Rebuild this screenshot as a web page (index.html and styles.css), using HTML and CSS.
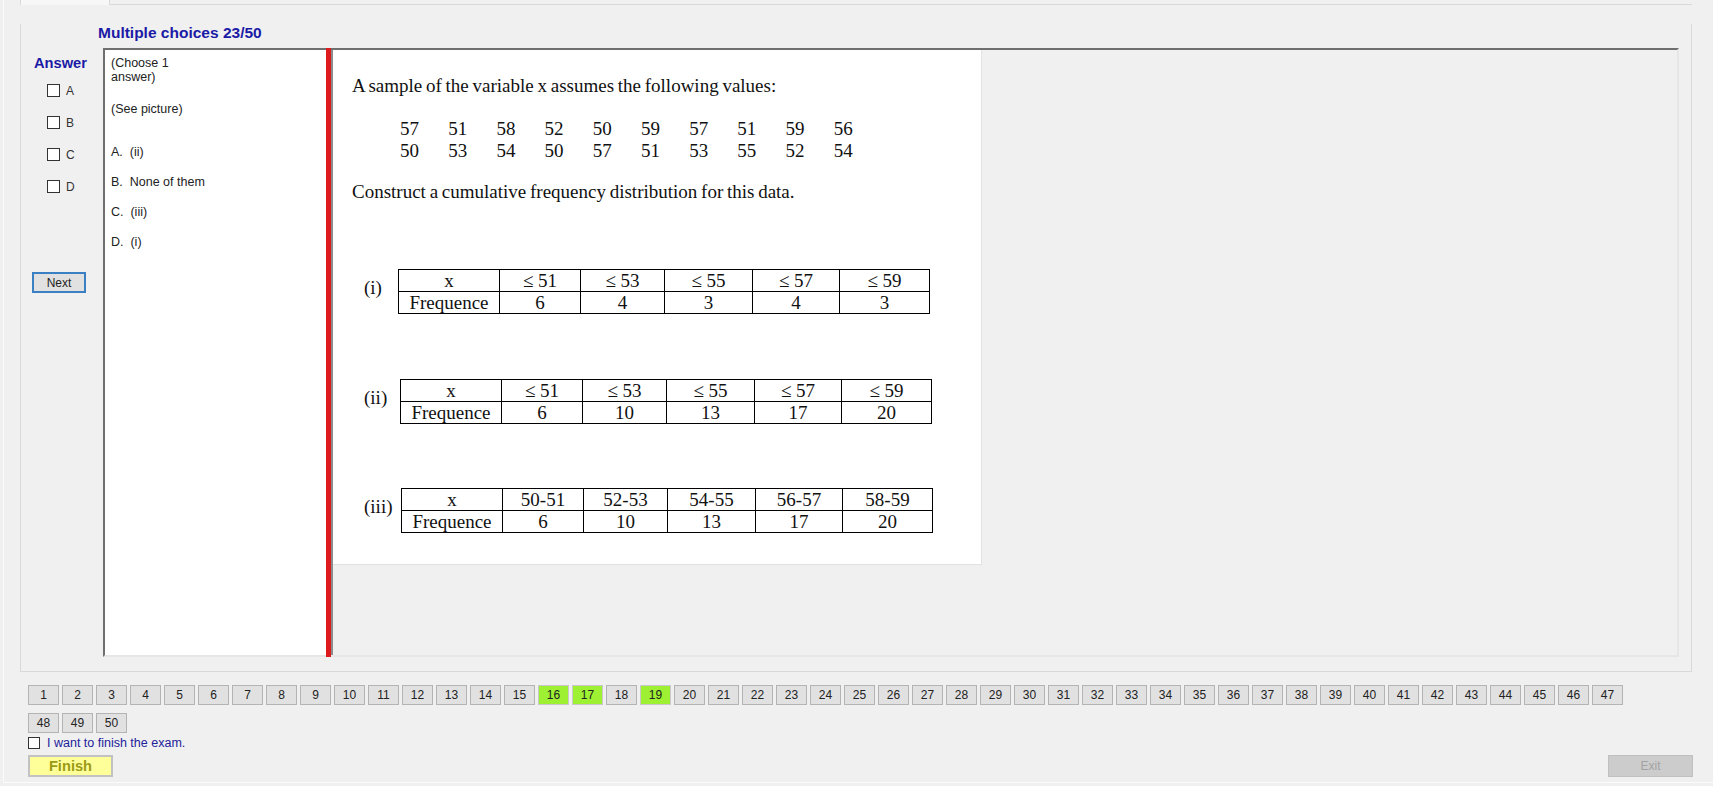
FILE: index.html
```html
<!DOCTYPE html>
<html>
<head>
<meta charset="utf-8">
<title>Exam</title>
<link rel="stylesheet" href="styles.css">
</head>
<body>
<div class="window">
  <div class="tabstrip">
    <div class="tab-gap"></div>
    <div class="tab"></div>
    <div class="tab-rest"></div>
  </div>
  <div class="tabpanel">
    <div class="title">Multiple choices 23/50</div>
    <div class="main">
      <div class="answer-col">
        <div class="answer-title">Answer</div>
        <div class="opts">
          <div class="opt"><span class="cb"></span><span>A</span></div>
          <div class="opt"><span class="cb"></span><span>B</span></div>
          <div class="opt"><span class="cb"></span><span>C</span></div>
          <div class="opt"><span class="cb"></span><span>D</span></div>
        </div>
        <button class="next">Next</button>
      </div>
      <div class="viewer">
        <div class="qtext">
          <p class="choose">(Choose 1<br>answer)</p>
          <p class="see">(See picture)</p>
          <p class="ans first">A.&nbsp; (ii)</p>
          <p class="ans">B.&nbsp; None of them</p>
          <p class="ans">C.&nbsp; (iii)</p>
          <p class="ans">D.&nbsp; (i)</p>
        </div>
        <div class="splitter"></div>
        <div class="picpane">
          <div class="picture">
            <p class="ptext">A sample of the variable x assumes the following values:</p>
            <div class="nums">
              <div class="numrow"><span>57</span><span>51</span><span>58</span><span>52</span><span>50</span><span>59</span><span>57</span><span>51</span><span>59</span><span>56</span></div>
              <div class="numrow"><span>50</span><span>53</span><span>54</span><span>50</span><span>57</span><span>51</span><span>53</span><span>55</span><span>52</span><span>54</span></div>
            </div>
            <p class="ptext construct">Construct a cumulative frequency distribution for this data.</p>

            <div class="tblock first">
              <div class="tlabel">(i)</div>
              <table class="ftable">
                <colgroup><col class="c0"><col class="c1"><col class="c2"><col class="c3"><col class="c4"><col class="c5"></colgroup>
                <tr><td>x</td><td>≤ 51</td><td>≤ 53</td><td>≤ 55</td><td>≤ 57</td><td>≤ 59</td></tr>
                <tr><td>Frequence</td><td>6</td><td>4</td><td>3</td><td>4</td><td>3</td></tr>
              </table>
            </div>

            <div class="tblock second">
              <div class="tlabel">(ii)</div>
              <table class="ftable">
                <colgroup><col class="c0"><col class="c1"><col class="c2"><col class="c3"><col class="c4"><col class="c5"></colgroup>
                <tr><td>x</td><td>≤ 51</td><td>≤ 53</td><td>≤ 55</td><td>≤ 57</td><td>≤ 59</td></tr>
                <tr><td>Frequence</td><td>6</td><td>10</td><td>13</td><td>17</td><td>20</td></tr>
              </table>
            </div>

            <div class="tblock third">
              <div class="tlabel">(iii)</div>
              <table class="ftable">
                <colgroup><col class="c0"><col class="c1"><col class="c2"><col class="c3"><col class="c4"><col class="c5"></colgroup>
                <tr><td>x</td><td>50-51</td><td>52-53</td><td>54-55</td><td>56-57</td><td>58-59</td></tr>
                <tr><td>Frequence</td><td>6</td><td>10</td><td>13</td><td>17</td><td>20</td></tr>
              </table>
            </div>
          </div>
        </div>
      </div>
    </div>
  </div>

  <div class="bottom">
    <div class="nav">
      <button class="nb">1</button><button class="nb">2</button><button class="nb">3</button><button class="nb">4</button><button class="nb">5</button><button class="nb">6</button><button class="nb">7</button><button class="nb">8</button><button class="nb">9</button><button class="nb">10</button>
      <button class="nb">11</button><button class="nb">12</button><button class="nb">13</button><button class="nb">14</button><button class="nb">15</button><button class="nb done">16</button><button class="nb done">17</button><button class="nb">18</button><button class="nb done">19</button><button class="nb">20</button>
      <button class="nb">21</button><button class="nb">22</button><button class="nb">23</button><button class="nb">24</button><button class="nb">25</button><button class="nb">26</button><button class="nb">27</button><button class="nb">28</button><button class="nb">29</button><button class="nb">30</button>
      <button class="nb">31</button><button class="nb">32</button><button class="nb">33</button><button class="nb">34</button><button class="nb">35</button><button class="nb">36</button><button class="nb">37</button><button class="nb">38</button><button class="nb">39</button><button class="nb">40</button>
      <button class="nb">41</button><button class="nb">42</button><button class="nb">43</button><button class="nb">44</button><button class="nb">45</button><button class="nb">46</button><button class="nb">47</button><button class="nb">48</button><button class="nb">49</button><button class="nb">50</button>
    </div>
    <div class="finish-check"><span class="cb small"></span><span>I want to finish the exam.</span></div>
    <div class="actions">
      <button class="finish">Finish</button>
      <button class="exit">Exit</button>
    </div>
  </div>
</div>
</body>
</html>
```

FILE: styles.css
```css
* { box-sizing: border-box; }
html, body { margin: 0; padding: 0; }
body {
  background: #f0f0f0;
  font-family: "Liberation Sans", Arial, sans-serif;
  color: #222;
  width: 1713px;
  height: 786px;
  overflow: hidden;
}
.window {
  margin-left: 3px;
  border-left: 1px solid #fbfbfb;
  border-bottom: 1px solid #fbfbfb;
  padding-bottom: 5px;
}

/* tab strip */
.tabstrip { display: flex; height: 5px; }
.tab-gap { width: 16px; }
.tab { width: 90px; border-left: 1px solid #d9d9d9; border-right: 1px solid #d9d9d9; background: #f7f7f7; }
.tab-rest { width: 1582px; border-bottom: 1px solid #d9d9d9; }

.tabpanel {
  margin-left: 16px;
  width: 1672px;
  border: 1px solid #d9d9d9;
  border-top: none;
  padding: 0 12px 14px 0;
}
.title {
  margin-top: 19px;
  padding-left: 77px;
  font-size: 15.5px;
  line-height: 17px;
  font-weight: bold;
  color: #1a1aa6;
}
.main {
  display: flex;
  margin-top: 7px;
  height: 609px;
}

/* answer column */
.answer-col { width: 82px; display: flex; flex-direction: column; }
.answer-title {
  margin-top: 7px;
  padding-left: 13px;
  font-size: 14.67px;
  line-height: 17px;
  font-weight: bold;
  color: #1a1aa6;
}
.opts { display: flex; flex-direction: column; gap: 19px; margin-top: 12px; padding-left: 26px; }
.opt { display: flex; align-items: center; gap: 6px; height: 13px; font-size: 12px; color: #333; }
.cb { display: inline-block; width: 13px; height: 13px; border: 1px solid #333; background: #fff; }
.next {
  margin: 79px 0 0 11px;
  width: 54px;
  height: 21px;
  padding: 0;
  border: 2px solid #3a80c2;
  background: #e1e1e1;
  font-family: "Liberation Sans Narrow", "Liberation Sans", Arial, sans-serif;
  font-size: 12px;
  color: #222;
}

/* viewer */
.viewer {
  width: 1576px;
  display: flex;
  border: 2px solid;
  border-color: #6f6f6f #e6e6e6 #e6e6e6 #6f6f6f;
}
.qtext {
  width: 221px;
  background: #fff;
  padding: 6px 0 0 6px;
  font-size: 12.5px;
  line-height: 14px;
  color: #222;
}
.qtext p { margin: 0; }
.see { margin-top: 18px !important; }
.ans.first { margin-top: 29px !important; }
.ans + .ans { margin-top: 16px !important; }
.splitter {
  width: 5px;
  margin: -2px 0;
  background: #dd1a1e;
}
.picpane {
  flex: 1;
  border-left: 2px solid #8c8c8c;
  background: #f0f0f0;
}
.picture {
  width: 649px;
  height: 515px;
  background: #fff;
  border-right: 1px solid #e2e2e2;
  border-bottom: 1px solid #e2e2e2;
  padding: 25px 0 0 19px;
  font-family: "Liberation Serif", "Times New Roman", serif;
  font-size: 19px;
  line-height: 22px;
  color: #111;
}
.ptext { margin: 0; word-spacing: -1px; }
.nums { margin-top: 21px; padding-left: 48px; }
.numrow { display: flex; }
.numrow span { width: 48.2px; }
.construct { margin-top: 19px; }

.tblock { display: flex; align-items: center; padding-left: 12px; }
.tblock.first { margin-top: 66px; }
.tblock.second { margin-top: 65px; }
.tblock.third { margin-top: 64px; }
.tlabel { width: 34px; margin-bottom: 8px; }
.second .tlabel { width: 36px; }
.third .tlabel { width: 37px; }
.ftable {
  border-collapse: collapse;
  table-layout: fixed;
  width: 531px;
}
.ftable td {
  border: 1px solid #000;
  padding: 0;
  height: 22px;
  line-height: 20px;
  text-align: center;
  white-space: nowrap;
}
.c0 { width: 101px; }
.c1 { width: 81px; }
.c2 { width: 84px; }
.c3 { width: 88px; }
.c4 { width: 87px; }
.c5 { width: 90px; }

/* bottom */
.bottom { padding: 0 20px 0 24px; }
.nav {
  margin-top: 13px;
  width: 1600px;
  display: flex;
  flex-wrap: wrap;
  gap: 8px 3px;
}
.nb {
  width: 31px;
  height: 20px;
  padding: 0;
  border: 1px solid #b4b4b4;
  background: #e1e1e1;
  font-family: "Liberation Sans Narrow", "Liberation Sans", Arial, sans-serif;
  font-size: 12px;
  color: #222;
}
.nb.done { background: #9ef032; border-color: #c8c8c8; }
.finish-check {
  margin-top: 4px;
  display: flex;
  align-items: center;
  gap: 7px;
  height: 12px;
  font-size: 12.5px;
  color: #22229a;
}
.cb.small { width: 12px; height: 12px; }
.actions {
  margin-top: 6px;
  display: flex;
  justify-content: space-between;
}
.finish {
  width: 85px;
  height: 22px;
  padding: 0;
  border: 2px solid #c2c2c2;
  background: #ffff99;
  font-family: "Liberation Sans", Arial, sans-serif;
  font-weight: bold;
  font-size: 14.67px;
  color: #9a9a14;
}
.exit {
  width: 85px;
  height: 22px;
  padding: 0;
  border: 1px solid #c0c0c0;
  background: #cccccc;
  font-family: "Liberation Sans Narrow", "Liberation Sans", Arial, sans-serif;
  font-size: 12px;
  color: #a3a3a3;
}
```
